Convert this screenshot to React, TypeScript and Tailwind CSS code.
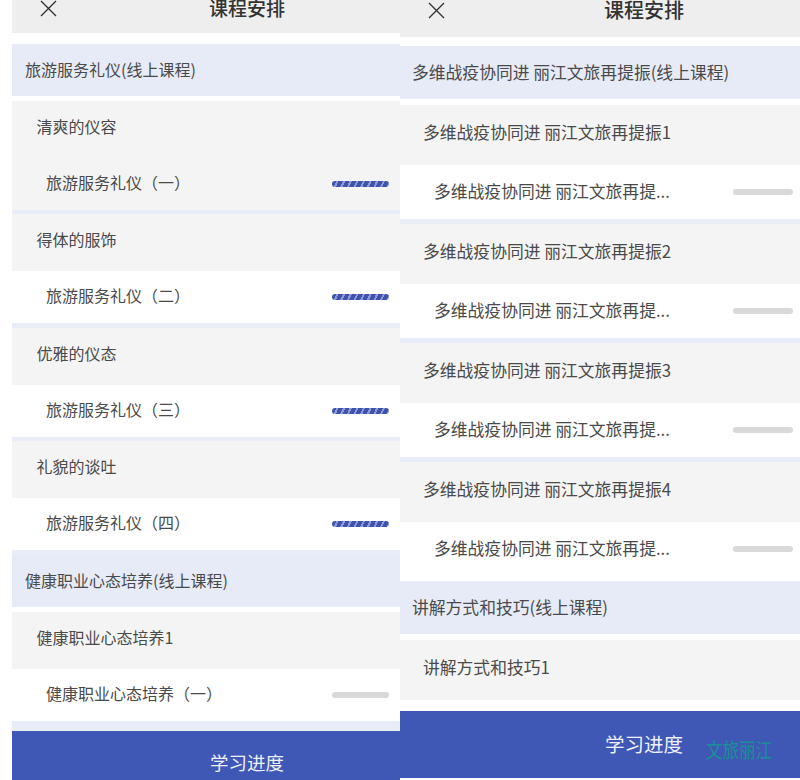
import React from "react";

const font = "font-['Noto_Sans_CJK_SC','Noto_Sans',sans-serif]";

interface Metrics {
  section: string;
  gap: string;
  chapter: string;
  lesson: string;
  lift: string;
  sectionPad: string;
  chapterPad: string;
  lessonPad: string;
  barWidth: string;
  barRight: string;
  text: string;
}

const leftMetrics: Metrics = {
  section: "h-[52px] pb-[3px]",
  gap: "h-[5px]",
  chapter: "h-[57px] pb-[8px]",
  lesson: "h-[52px] pb-[1px]",
  lift: "mb-[4px]",
  sectionPad: "pl-[13px]",
  chapterPad: "pl-[24.5px]",
  lessonPad: "pl-[34px]",
  barWidth: "w-[57px]",
  barRight: "pr-[11px]",
  text: "text-[16px]",
};

const rightMetrics: Metrics = {
  section: "h-[53px]",
  gap: "h-[6px]",
  chapter: "h-[60px] pb-[4px]",
  lesson: "h-[54px]",
  lift: "mb-0",
  sectionPad: "pl-[12px]",
  chapterPad: "pl-[23px]",
  lessonPad: "pl-[34px]",
  barWidth: "w-[60px]",
  barRight: "pr-[7px]",
  text: "text-[16.8px]",
};

const Close = () => (
  <svg width="17" height="17" viewBox="0 0 17 17" className="shrink-0 text-[#333]">
    <path d="M1 1 L16 16 M16 1 L1 16" stroke="currentColor" strokeWidth="1.4" fill="none" />
  </svg>
);

const SectionRow = ({ m, title }: { m: Metrics; title: string }) => (
  <div className={`${m.section} ${m.sectionPad} ${m.text} flex shrink-0 items-center bg-[#e6ebf7] text-[#4a4a4a]`}>
    {title}
  </div>
);

const ChapterRow = ({ m, title }: { m: Metrics; title: string }) => (
  <div className={`${m.chapter} ${m.chapterPad} ${m.text} flex shrink-0 items-center bg-[#f4f4f4] text-[#4a4a4a]`}>
    {title}
  </div>
);

const LessonRow = ({
  m,
  title,
  done,
  active,
}: {
  m: Metrics;
  title: string;
  done?: boolean;
  active?: boolean;
}) => (
  <div
    className={`${m.lesson} ${m.lessonPad} ${m.barRight} ${m.text} flex shrink-0 items-center justify-between text-[#4a4a4a] ${
      active ? "bg-[#f4f4f4]" : "bg-white"
    }`}
  >
    <span className={m.lift}>{title}</span>
    <div
      className={`${m.barWidth} h-[6px] rounded-full ${
        done
          ? "bg-[repeating-linear-gradient(115deg,#3f53ad_0px,#3f53ad_4px,#8d9ad4_4px,#8d9ad4_6px)]"
          : "bg-[#d9d9d9]"
      }`}
    />
  </div>
);

const Divider = ({ tall }: { tall?: boolean }) => (
  <div className={`${tall ? "h-[5px]" : "h-[4px]"} shrink-0 bg-[#e9edf8]`} />
);

const App = () => {
  const ly = "旅游服务礼仪";
  const dw = "多维战疫协同进 丽江文旅再提振";
  const dwShort = "多维战疫协同进 丽江文旅再提...";

  return (
    <div className={`${font} flex h-[780px] w-[800px] overflow-hidden bg-white`}>
      {/* left phone */}
      <div className="ml-[12px] flex h-[780px] w-[388px] flex-col overflow-hidden">
        <div className="flex h-[33px] shrink-0 items-center bg-[#eeeeee] pb-[17px] pl-[28px]">
          <Close />
          <span className="ml-[152px] text-[19px] font-medium text-[#333]">课程安排</span>
        </div>
        <div className="h-[11px] shrink-0" />
        <SectionRow m={leftMetrics} title={`${ly}(线上课程)`} />
        <div className={`${leftMetrics.gap} shrink-0`} />
        <ChapterRow m={leftMetrics} title="清爽的仪容" />
        <LessonRow m={leftMetrics} title={`${ly}（一）`} done active />
        <Divider />
        <ChapterRow m={leftMetrics} title="得体的服饰" />
        <LessonRow m={leftMetrics} title={`${ly}（二）`} done />
        <Divider tall />
        <ChapterRow m={leftMetrics} title="优雅的仪态" />
        <LessonRow m={leftMetrics} title={`${ly}（三）`} done />
        <Divider />
        <ChapterRow m={leftMetrics} title="礼貌的谈吐" />
        <LessonRow m={leftMetrics} title={`${ly}（四）`} done />
        <Divider tall />
        <SectionRow m={leftMetrics} title="健康职业心态培养(线上课程)" />
        <div className={`${leftMetrics.gap} shrink-0`} />
        <ChapterRow m={leftMetrics} title="健康职业心态培养1" />
        <LessonRow m={leftMetrics} title="健康职业心态培养（一）" />
        <div className="h-[10px] shrink-0 bg-[#e9edf8]" />
        <div className="flex h-[49px] shrink-0 items-start justify-center bg-[#3f57b5] pl-[82px] pt-[18px] text-[18.5px] leading-[27px] text-[#eef0fa]">
          学习进度
        </div>
      </div>

      {/* right phone */}
      <div className="flex h-[780px] w-[400px] flex-col overflow-hidden">
        <div className="flex h-[37px] shrink-0 items-center bg-[#eeeeee] pb-[17px] pl-[28px]">
          <Close />
          <span className="ml-[159px] text-[20px] font-medium text-[#333]">课程安排</span>
        </div>
        <div className="h-[9px] shrink-0" />
        <SectionRow m={rightMetrics} title={`${dw}(线上课程)`} />
        <div className={`${rightMetrics.gap} shrink-0`} />
        <ChapterRow m={rightMetrics} title={`${dw}1`} />
        <LessonRow m={rightMetrics} title={dwShort} />
        <Divider tall />
        <ChapterRow m={rightMetrics} title={`${dw}2`} />
        <LessonRow m={rightMetrics} title={dwShort} />
        <Divider tall />
        <ChapterRow m={rightMetrics} title={`${dw}3`} />
        <LessonRow m={rightMetrics} title={dwShort} />
        <Divider tall />
        <ChapterRow m={rightMetrics} title={`${dw}4`} />
        <div className="flex h-[59px] shrink-0 items-start justify-between bg-white pl-[34px] pr-[7px] pt-[14px] text-[16.8px] text-[#4a4a4a]">
          <span>{dwShort}</span>
          <div className="mt-[10px] h-[6px] w-[60px] rounded-full bg-[#d9d9d9]" />
        </div>
        <SectionRow m={rightMetrics} title="讲解方式和技巧(线上课程)" />
        <div className={`${rightMetrics.gap} shrink-0`} />
        <ChapterRow m={rightMetrics} title="讲解方式和技巧1" />
        <div className="h-[11px] shrink-0" />
        <div className="relative flex h-[67px] shrink-0 items-start justify-center bg-[#3f57b5] pl-[88px] pt-[19px] text-[19.5px] leading-[28px] text-[#eef0fa]">
          学习进度
          <span className="absolute left-[306px] top-[26px] scale-y-125 text-[16.5px] leading-[24px] text-[#1c8f97]">
            文旅丽江
          </span>
        </div>
      </div>
    </div>
  );
};

export default App;
